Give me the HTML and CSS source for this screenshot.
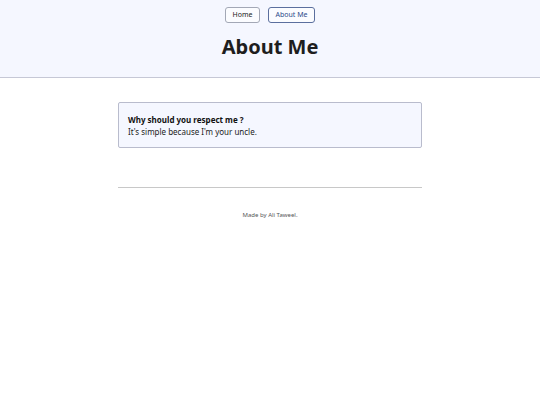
FILE: index.html
```html
<!DOCTYPE html>
<html>
<head>
<meta charset="utf-8">
<link rel="stylesheet" href="styles.css">
</head>
<body>
<header class="header">
  <nav class="nav">
    <a class="btn" href="#">Home</a>
    <a class="btn btn-active" href="#">About Me</a>
  </nav>
  <h1 class="title">About Me</h1>
</header>
<main class="main">
  <div class="card">
    <div class="card-q">Why should you respect me ?</div>
    <div class="card-a">It's simple because I'm your uncle.</div>
  </div>
  <hr class="rule">
  <footer class="footer">Made by Ali Taweel.</footer>
</main>
</body>
</html>
```
FILE: styles.css
```css
html, body { margin: 0; padding: 0; background: #fff; }
body { font-family: "Noto Sans", sans-serif; color: #1f1f1f; }
.header {
  background: #f5f7ff;
  border-bottom: 1px solid #c6c8d6;
  height: 78px;
  box-sizing: border-box;
  display: flex;
  flex-direction: column;
  align-items: center;
  padding-top: 7px;
}
.nav { display: flex; gap: 8px; }
.btn {
  font-family: "Noto Sans", sans-serif;
  font-size: 7px;
  line-height: 14px;
  padding: 0 6.5px;
  border: 1px solid #a3a8b6;
  border-radius: 3px;
  color: #222;
  text-decoration: none;
  background: #fbfcff;
}
.btn-active { border-color: #5b6f9e; color: #2c4a8a; }
.title {
  margin: 9px 0 0;
  font-size: 20px;
  line-height: 30px;
  font-weight: 700;
  color: #1e1e1e;
}
.main { width: 304px; margin: 24px auto 0; }
.card {
  background: #f5f7ff;
  border: 1px solid #b9bccd;
  border-radius: 2px;
  padding: 11px 9px 9px;
  font-size: 8px;
  line-height: 12px;
}
.card-q { font-weight: 700; color: #111; }
.card-a { color: #222; }
.rule { border: 0; border-top: 1px solid #c8c8c8; margin: 39px 0 0; }
.footer { text-align: center; font-size: 6px; color: #555; margin-top: 23px; }
```
